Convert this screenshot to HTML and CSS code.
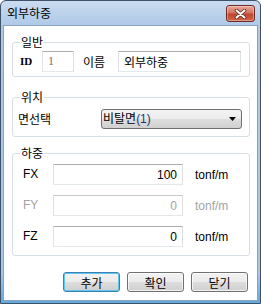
FILE: index.html
```html
<!DOCTYPE html>
<html lang="ko">
<head>
    <meta charset="UTF-8">
    <title>외부하중</title>
    <link rel="stylesheet" href="styles.css">
</head>
<body>
    <div class="window">
        <!-- 제목 표시줄 -->
        <div class="titlebar">
            <span class="title">외부하중</span>
            <button class="close">
                <svg width="13" height="10" viewBox="0 0 13 10">
                    <path d="M2.5 1.5 L10.5 8.5 M10.5 1.5 L2.5 8.5" stroke="#5a2a24" stroke-width="3.6" stroke-linecap="round"/>
                    <path d="M2.5 1.5 L10.5 8.5 M10.5 1.5 L2.5 8.5" stroke="#fff" stroke-width="2" stroke-linecap="round"/>
                </svg>
            </button>
        </div>

        <div class="client">
            <!-- 일반 -->
            <fieldset class="group group-general">
                <legend>일반</legend>
                <div class="row">
                    <span class="lbl lbl-id">ID</span>
                    <input class="field field-id" value="1" readonly>
                    <span class="lbl lbl-name">이름</span>
                    <input class="field field-name" value="외부하중">
                </div>
            </fieldset>

            <!-- 위치 -->
            <fieldset class="group group-place">
                <legend>위치</legend>
                <div class="row">
                    <span class="lbl lbl-face">면선택</span>
                    <div class="combo">
                        <span class="combo-text">비탈면<span class="num">(1)</span></span>
                        <svg class="arrow" width="7" height="4" viewBox="0 0 7 4">
                            <path d="M0 0 H7 L3.5 4 Z" fill="#000"/>
                        </svg>
                    </div>
                </div>
            </fieldset>

            <!-- 하중 -->
            <fieldset class="group group-load">
                <legend>하중</legend>
                <div class="row load-row">
                    <span class="lbl lbl-axis">FX</span>
                    <input class="field field-load" value="100">
                    <span class="unit">tonf/m</span>
                </div>
                <div class="row load-row disabled">
                    <span class="lbl lbl-axis">FY</span>
                    <input class="field field-load" value="0" disabled>
                    <span class="unit">tonf/m</span>
                </div>
                <div class="row load-row">
                    <span class="lbl lbl-axis">FZ</span>
                    <input class="field field-load" value="0">
                    <span class="unit">tonf/m</span>
                </div>
            </fieldset>

            <div class="buttons">
                <button class="btn btn-default">추가</button>
                <button class="btn">확인</button>
                <button class="btn">닫기</button>
            </div>
        </div>
    </div>
</body>
</html>
```

FILE: styles.css
```css
/* Globalne */
body {
    margin: 0;
    font-family: "Liberation Sans", "Noto Sans CJK KR", sans-serif;
    font-size: 12px;
    color: #000;
}
.window {
    width: 261px;
    height: 304px;
    box-sizing: border-box;
    border: 1px solid #3d5169;
    border-radius: 6px 6px 0 0;
    background: linear-gradient(#cadcf0, #afc9e7 24px, #a8c7e8 90%, #5fa9dc);
    padding: 0 2px 2px;
    display: flex;
    flex-direction: column;
}
/* Pasek tytułu */
.titlebar {
    height: 24px;
    display: flex;
    align-items: flex-start;
    justify-content: space-between;
}
.title {
    padding-left: 4px;
    line-height: 24px;
    font-family: "Noto Sans CJK KR", sans-serif;
}
.close {
    width: 29px;
    height: 17px;
    margin: 4px 3px 0 0;
    padding: 0;
    border: 1px solid #6e2b22;
    border-radius: 3px;
    background: linear-gradient(#e9a899, #d47463 45%, #c0452f 55%, #d2644a);
    display: flex;
    align-items: center;
    justify-content: center;
    box-shadow: inset 0 0 0 1px rgba(255, 255, 255, 0.35);
}
.client {
    flex: 1;
    background: #fff;
    border: 1px solid #8ca1bb;
    padding-bottom: 3px;
}
/* Grupy */
.group {
    margin: 9px 7px 0 8px;
    padding: 2px 7px 4px;
    border: 1px solid #d5dfe5;
    border-radius: 3px;
    min-inline-size: 0;
}
.group legend {
    padding: 0 1px;
    line-height: 14px;
    height: 14px;
    font-family: "Noto Sans CJK KR", sans-serif;
}
.group-place {
    margin-top: 13px;
    padding-top: 4px;
    padding-bottom: 7px;
}
.group-load {
    padding-top: 4px;
    padding-bottom: 8px;
    display: block;
}
.row {
    display: flex;
    align-items: center;
    height: 21px;
}
.lbl {
    line-height: 21px;
    font-family: "Noto Sans CJK KR", sans-serif;
}
.lbl-id {
    width: 22px;
    font-family: "Liberation Serif", serif;
    font-weight: bold;
    font-size: 11px;
}
.lbl-name {
    width: 35px;
    margin-left: 9px;
}
.lbl-face {
    width: 83px;
    margin-left: -2px;
}
/* Pola tekstowe */
.field {
    height: 21px;
    box-sizing: border-box;
    border: 1px solid;
    border-color: #abadb3 #dbdfe6 #e3e9ef #e2e3ea;
    padding: 0 4px;
    margin: 0;
    font: inherit;
    color: #000;
    background: #fff;
    outline: none;
}
.field-id {
    width: 32px;
    font-family: "Liberation Serif", serif;
    color: #6d6d6d;
    padding-left: 5px;
}
.field-name {
    width: 123px;
    font-family: "Noto Sans CJK KR", sans-serif;
    padding-left: 5px;
}
/* Lista rozwijana */
.combo {
    width: 141px;
    height: 20px;
    box-sizing: border-box;
    border: 1px solid #707070;
    border-radius: 3px;
    background: linear-gradient(#f3f3f3, #ececec 50%, #dedede 50%, #d0d0d0);
    display: flex;
    align-items: center;
    justify-content: space-between;
    padding: 0 5px 0 1px;
}
.combo-text {
    font-family: "Noto Sans CJK KR", sans-serif;
    line-height: 18px;
}
.combo-text .num {
    font-family: "Liberation Sans", sans-serif;
    color: #1e3578;
}
/* Obciążenia */
.load-row {
    padding-left: 3px;
}
.load-row + .load-row {
    margin-top: 10px;
}
.lbl-axis {
    width: 30px;
    font-family: "Liberation Sans", sans-serif;
}
.field-load {
    width: 130px;
    text-align: right;
    padding-right: 5px;
}
.unit {
    margin-left: 12px;
}
.disabled .lbl-axis,
.disabled .unit {
    color: #a3a3a3;
}
.field:disabled {
    color: #a3a3a3;
    border-color: #c9c9c9 #dfdfdf #e6e6e6 #e2e2e2;
    background: #fff;
}
/* Przyciski */
.buttons {
    display: flex;
    justify-content: flex-end;
    gap: 7px;
    margin: 16px 9px 0 0;
}
.btn {
    width: 57px;
    height: 20px;
    box-sizing: border-box;
    padding: 0;
    border: 1px solid #707070;
    border-radius: 3px;
    background: linear-gradient(#f2f2f2, #ebebeb 50%, #dddddd 50%, #cfcfcf);
    font-family: "Noto Sans CJK KR", sans-serif;
    font-size: 12px;
    color: #000;
    box-shadow: inset 0 0 0 1px rgba(255, 255, 255, 0.7);
}
.btn-default {
    border-color: #3c7fb1;
    box-shadow: inset 0 0 0 1px #5fc6ef;
}
```
